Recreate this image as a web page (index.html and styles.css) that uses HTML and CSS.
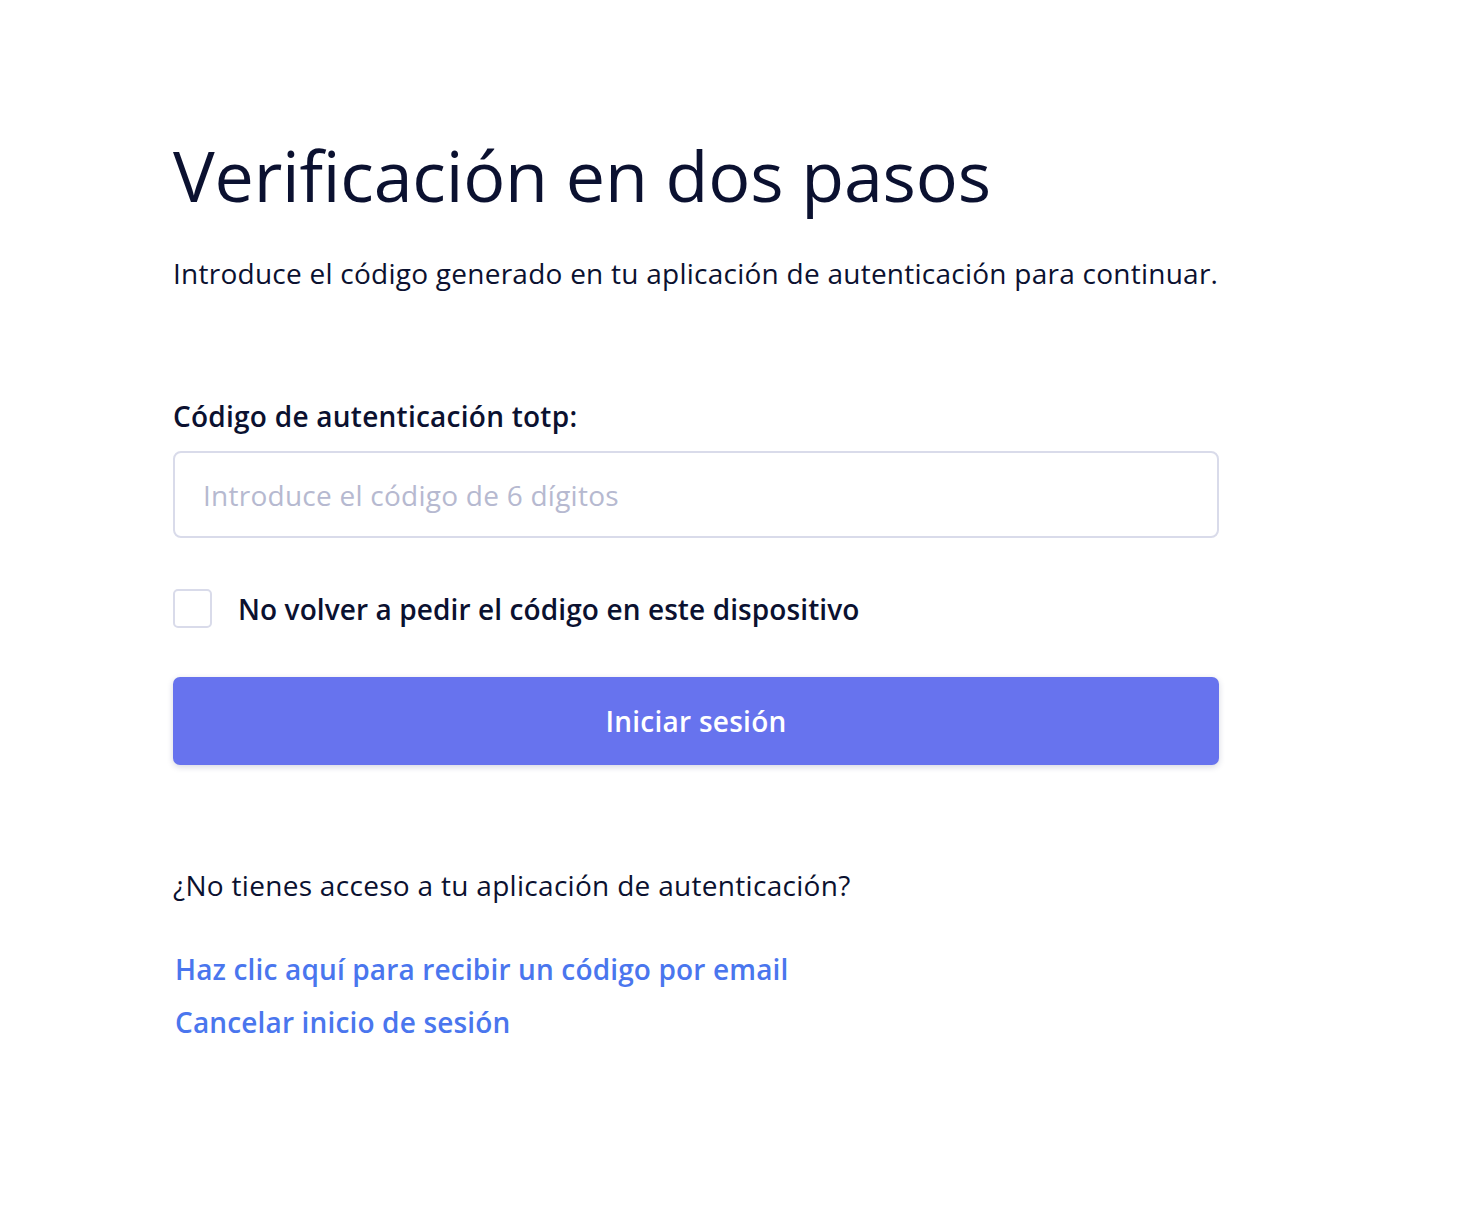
FILE: index.html
```html
<!DOCTYPE html>
<html lang="es">
<head>
<meta charset="utf-8">
<title>Verificación en dos pasos</title>
<link rel="stylesheet" href="styles.css">
</head>
<body>
<main class="page">
  <h1 class="title">Verificación en dos pasos</h1>
  <p class="subtitle">Introduce el código generado en tu aplicación de autenticación para continuar.</p>
  <form class="form">
    <label class="field-label" for="code">Código de autenticación totp:</label>
    <input class="field-input" id="code" type="text" placeholder="Introduce el código de 6 dígitos">
    <label class="remember">
      <span class="checkbox"></span>
      <span class="remember-text">No volver a pedir el código en este dispositivo</span>
    </label>
    <button class="submit" type="button">Iniciar sesión</button>
  </form>
  <p class="question">¿No tienes acceso a tu aplicación de autenticación?</p>
  <div class="links">
    <a class="link" href="#">Haz clic aquí para recibir un código por email</a>
    <a class="link" href="#">Cancelar inicio de sesión</a>
  </div>
</main>
</body>
</html>
```

FILE: styles.css
```css
html, body {
  margin: 0;
  padding: 0;
  background: #ffffff;
}
body {
  font-family: "Open Sans", "Liberation Sans", sans-serif;
  color: #0b1130;
  letter-spacing: 0.25px;
}
.page {
  width: 1046px;
  margin-left: 173px;
  padding-top: 130px;
}
.title {
  font-family: "Open Sans", "Liberation Sans", sans-serif;
  font-weight: 400;
  font-size: 70px;
  line-height: 90px;
  margin: 0;
  color: #0b1130;
  letter-spacing: -0.2px;
}
.subtitle {
  margin: 36px 0 0;
  font-size: 28px;
  line-height: 34px;
  white-space: nowrap;
  letter-spacing: 0.25px;
}
.form {
  display: flex;
  flex-direction: column;
  margin-top: 109px;
}
.field-label {
  font-size: 28px;
  font-weight: 600;
  line-height: 34px;
}
.field-input {
  margin-top: 18px;
  box-sizing: border-box;
  height: 87px;
  width: 100%;
  border: 2px solid #d9dbea;
  border-radius: 8px;
  padding: 0 28px;
  font-family: inherit;
  font-size: 28px;
  letter-spacing: 0.25px;
  color: #0b1130;
  outline: none;
}
.field-input::placeholder {
  color: #b6b9d0;
}
.remember {
  display: flex;
  align-items: center;
  gap: 26px;
  margin-top: 51px;
}
.checkbox {
  box-sizing: border-box;
  width: 39px;
  height: 39px;
  border: 2px solid #d9dbea;
  border-radius: 5px;
  flex: none;
}
.remember-text {
  font-size: 28px;
  font-weight: 600;
  letter-spacing: 0.1px;
}
.submit {
  margin-top: 49px;
  height: 88px;
  width: 100%;
  border: none;
  border-radius: 7px;
  background: #6773ee;
  color: #ffffff;
  font-family: inherit;
  font-size: 28px;
  font-weight: 600;
  letter-spacing: 0.25px;
  box-shadow: 0 2px 6px rgba(30, 40, 90, 0.18);
}
.question {
  margin: 103px 0 0;
  font-size: 28px;
  line-height: 34px;
  letter-spacing: 0.3px;
}
.links {
  display: flex;
  flex-direction: column;
  align-items: flex-start;
  margin-top: 50px;
  padding-left: 2px;
  gap: 19px;
}
.link {
  color: #4a76ee;
  font-size: 28px;
  font-weight: 600;
  line-height: 34px;
  letter-spacing: 0.15px;
  text-decoration: none;
}
```
